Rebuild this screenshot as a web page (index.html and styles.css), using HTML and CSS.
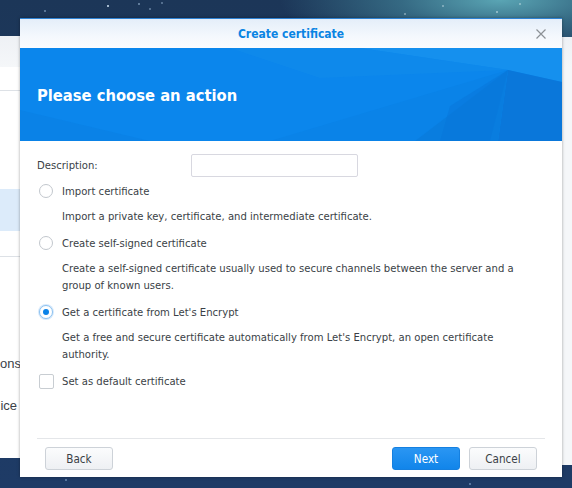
FILE: index.html
```html
<!DOCTYPE html>
<html lang="en">
<head>
    <meta charset="UTF-8">
    <meta name="viewport" content="width=device-width, initial-scale=1.0">
    <title>Create certificate</title>
    <link rel="stylesheet" href="styles.css">
</head>
<body>
    <div class="desktop">
        <svg class="stars" width="572" height="488" viewBox="0 0 572 488">
            <circle cx="108" cy="6" r="1" fill="#cfe3f5"/>
            <circle cx="45" cy="11" r="0.8" fill="#a9c6e6"/>
            <circle cx="139" cy="4" r="0.8" fill="#b7d3ee"/>
            <circle cx="150" cy="9" r="0.7" fill="#b7d3ee"/>
            <circle cx="162" cy="3" r="0.7" fill="#b7d3ee"/>
            <circle cx="405" cy="14" r="0.7" fill="#dff0f5"/>
            <circle cx="443" cy="6" r="0.7" fill="#dff0f5"/>
            <circle cx="497" cy="12" r="0.8" fill="#e4f4f7"/>
            <circle cx="520" cy="4" r="0.7" fill="#e4f4f7"/>
            <circle cx="66" cy="480" r="0.8" fill="#9fc0e6"/>
            <circle cx="470" cy="484" r="0.8" fill="#9fc0e6"/>
            <circle cx="548" cy="475" r="0.8" fill="#9fc0e6"/>
        </svg>

        <div class="bg-window bg-left">
            <div class="bg-head"></div>
            <div class="bg-row bg-line"></div>
            <div class="bg-gap"></div>
            <div class="bg-row bg-selected"></div>
            <div class="bg-row bg-line bg-plain"></div>
            <div class="bg-label first">ons</div>
            <div class="bg-label">ice</div>
        </div>
        <div class="bg-window bg-right">
            <div class="bg-head"></div>
        </div>

        <div class="dialog">
            <div class="dialog-title">
                <span>Create certificate</span>
                <svg class="close" width="10" height="10" viewBox="0 0 10 10">
                    <path d="M0.5 0.5 L9.5 9.5 M9.5 0.5 L0.5 9.5" stroke="#8c9196" stroke-width="1.2" fill="none"/>
                </svg>
            </div>

            <div class="banner">
                <svg class="facets" viewBox="0 0 542 93" preserveAspectRatio="none">
                    <polygon points="0,62 130,93 0,93" fill="#0a82e7"/>
                    <polygon points="250,93 488,22 395,93" fill="#0a83e8"/>
                    <polygon points="340,0 542,0 542,34 488,22" fill="#1590ee"/>
                    <polygon points="488,22 542,34 542,93 478,93" fill="#0a77da"/>
                    <polygon points="488,22 478,93 395,93" fill="#097ddf"/>
                    <polygon points="430,58 488,22 470,93 420,93" fill="#0875d9" opacity="0.5"/>
                    <polygon points="210,0 340,0 488,22 300,30" fill="#0f8aeb" opacity="0.7"/>
                </svg>
                <h1>Please choose an action</h1>
            </div>

            <div class="dialog-body">
                <div class="field">
                    <label for="desc">Description:</label>
                    <input id="desc" type="text">
                </div>

                <div class="option">
                    <span class="radio"></span>
                    <span>Import certificate</span>
                </div>
                <p class="hint">Import a private key, certificate, and intermediate certificate.</p>

                <div class="option">
                    <span class="radio"></span>
                    <span>Create self-signed certificate</span>
                </div>
                <p class="hint">Create a self-signed certificate usually used to secure channels between the server and a<br>group of known users.</p>

                <div class="option">
                    <span class="radio checked"></span>
                    <span>Get a certificate from Let's Encrypt</span>
                </div>
                <p class="hint">Get a free and secure certificate automatically from Let's Encrypt, an open certificate<br>authority.</p>

                <div class="option">
                    <span class="checkbox"></span>
                    <span>Set as default certificate</span>
                </div>
            </div>

            <div class="dialog-footer">
                <button class="btn">Back</button>
                <div class="footer-right">
                    <button class="btn primary">Next</button>
                    <button class="btn">Cancel</button>
                </div>
            </div>
        </div>
    </div>
</body>
</html>
```

FILE: styles.css
```css
body {
    margin: 0;
    width: 572px;
    height: 488px;
    overflow: hidden;
    font-family: "DejaVu Sans Condensed", "DejaVu Sans", sans-serif;
    font-stretch: condensed;
}
.desktop {
    position: relative;
    width: 572px;
    height: 488px;
    overflow: hidden;
    background:
        radial-gradient(ellipse 220px 60px at 500px 0px, #5aa5b4 0%, rgba(70, 140, 160, 0.6) 45%, rgba(30, 70, 110, 0) 100%),
        linear-gradient(180deg, #1c3658 0%, #1d3a5f 40%, #1e3b66 100%);
}
.stars {
    position: absolute;
    left: 0;
    top: 0;
}

/* windows behind the dialog */
.bg-window {
    position: absolute;
    background-color: #fff;
    display: flex;
    flex-direction: column;
}
.bg-left {
    left: 0;
    top: 36px;
    width: 20px;
    height: 422px;
}
.bg-right {
    left: 560px;
    top: 37px;
    width: 40px;
    height: 428px;
    background-color: #f5f7f9;
}
.bg-head {
    height: 31px;
    background: linear-gradient(180deg, #eef1f5, #f5f7f9);
    flex-shrink: 0;
}
.bg-row {
    height: 23px;
    flex-shrink: 0;
}
.bg-line {
    border-bottom: 1px solid #dde1e6;
}
.bg-gap {
    height: 98px;
}
.bg-selected {
    height: 42px;
    background-color: #dcebfa;
}
.bg-plain {
    height: 25px;
}
.bg-label {
    font-family: "Liberation Sans", Arial, sans-serif;
    font-size: 13px;
    color: #3b4148;
    text-align: right;
    padding-right: 3px;
    line-height: 16px;
    margin-top: 26px;
}
.bg-label.first {
    margin-top: 99px;
}

/* dialog */
.dialog {
    position: absolute;
    left: 20px;
    top: 18px;
    width: 542px;
    height: 459px;
    box-sizing: border-box;
    border-top: 1px solid #2d82d4;
    background-color: #fff;
    display: flex;
    flex-direction: column;
    box-shadow: 0 0 3px rgba(0, 0, 0, 0.35);
}
.dialog-title {
    position: relative;
    height: 29px;
    flex-shrink: 0;
    background: linear-gradient(180deg, #e4eef9 0%, #f4f8fd 60%, #fbfcfe 100%);
    display: flex;
    align-items: center;
    justify-content: center;
    color: #0a84e3;
    font-size: 12px;
    font-weight: bold;
}
.close {
    position: absolute;
    right: 16px;
    top: 10px;
}
.banner {
    position: relative;
    height: 93px;
    flex-shrink: 0;
    background-color: #0b86ec;
    display: flex;
    align-items: center;
    overflow: hidden;
}
.facets {
    position: absolute;
    left: 0;
    top: 0;
    width: 100%;
    height: 100%;
}
.banner h1 {
    position: relative;
    margin: 2px 0 0 17px;
    font-size: 16.4px;
    font-weight: bold;
    color: #fff;
}
.dialog-body {
    flex: 1;
    padding: 13px 17px 0;
    color: #3a3f46;
    font-size: 11.2px;
}
.field {
    display: flex;
    align-items: center;
    height: 23px;
}
.field label {
    width: 154px;
}
.field input {
    width: 167px;
    height: 23px;
    box-sizing: border-box;
    border: 1px solid #d8d8e0;
    border-radius: 2px;
    margin: 0;
    padding: 0 5px;
}
.option {
    display: flex;
    align-items: center;
    height: 18px;
    margin-top: 9px;
}
.field + .option {
    margin-top: 5px;
}
.radio {
    width: 14px;
    height: 14px;
    box-sizing: border-box;
    border: 1px solid #c2c7cd;
    border-radius: 50%;
    background-color: #fff;
    margin: 0 9px 0 2px;
    position: relative;
}
.radio.checked {
    border-color: #8cc1f0;
    box-shadow: 0 0 0 1px #d6e9fb;
}
.radio.checked::after {
    content: "";
    position: absolute;
    left: 3px;
    top: 3px;
    width: 6px;
    height: 6px;
    border-radius: 50%;
    background-color: #0a82e8;
}
.checkbox {
    width: 15px;
    height: 15px;
    box-sizing: border-box;
    border: 1px solid #c8cdd2;
    border-radius: 2px;
    background-color: #fff;
    margin: 0 8px 0 2px;
}
.hint {
    margin: 8px 0 0;
    padding-left: 25px;
    line-height: 17px;
}
.dialog-footer {
    margin: 0 17px;
    border-top: 1px solid #e4e6e9;
    padding: 8px 8px 7px;
    display: flex;
    justify-content: space-between;
}
.footer-right {
    display: flex;
    gap: 9px;
}
.btn {
    width: 68px;
    height: 23px;
    margin: 0;
    padding: 0;
    border: 1px solid #cdd2d8;
    border-radius: 3px;
    background: linear-gradient(180deg, #fbfcfd, #eef0f3);
    color: #3a3f46;
    font-family: inherit;
    font-stretch: condensed;
    font-size: 11.6px;
}
.btn.primary {
    border-color: #1580e0;
    background: linear-gradient(180deg, #2a96f3, #1185ea);
    color: #fff;
}
```
